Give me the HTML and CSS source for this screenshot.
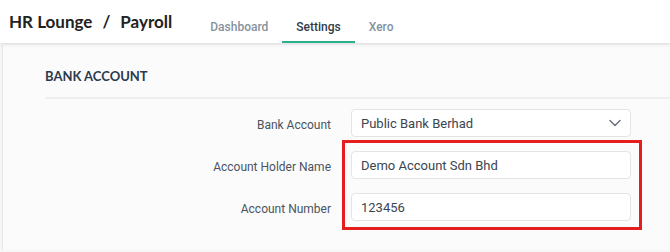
FILE: index.html
```html
<!DOCTYPE html>
<html lang="en">
<head>
    <meta charset="UTF-8">
    <meta name="viewport" content="width=device-width, initial-scale=1.0">
    <title>HR Lounge - Payroll Settings</title>
    <link rel="stylesheet" href="styles.css">
</head>
<body>

    <!-- Top Bar -->
    <div class="topbar">
        <div class="brand">
            <span>HR Lounge</span>
            <span class="slash">/</span>
            <span>Payroll</span>
        </div>
        <div class="tabs">
            <a href="#">Dashboard</a>
            <a href="#" class="active">Settings</a>
            <a href="#">Xero</a>
        </div>
    </div>

    <!-- Settings Card -->
    <div class="page">
        <div class="card">
            <div class="section-title">BANK ACCOUNT</div>

            <div class="form">
                <label for="bank">Bank Account</label>
                <div class="select-box">
                    <span id="bank">Public Bank Berhad</span>
                    <svg width="12" height="8" viewBox="0 0 12 8">
                        <path d="M1 1.5 L6 6.5 L11 1.5" fill="none" stroke="#69737f" stroke-width="1.5" stroke-linecap="round" stroke-linejoin="round"/>
                    </svg>
                </div>

                <label for="holder">Account Holder Name</label>
                <input id="holder" type="text" value="Demo Account Sdn Bhd">

                <label for="number">Account Number</label>
                <input id="number" type="text" value="123456">

                <!-- highlight box -->
                <div class="highlight"></div>
            </div>
        </div>
    </div>

</body>
</html>
```

FILE: styles.css
```css
body {
    margin: 0;
    padding: 0;
    font-family: Roboto, Arial, sans-serif;
    background-color: #f6f6f6;
    overflow: hidden;
}

/* Top Bar */
.topbar {
    display: flex;
    align-items: stretch;
    height: 43px;
    padding-left: 9px;
    background-color: #fff;
    box-shadow: 0 1px 4px rgba(0, 0, 0, 0.12);
    position: relative;
    z-index: 1;
}

.brand {
    display: flex;
    align-items: center;
    font-family: Lato, "Open Sans", sans-serif;
    font-weight: 700;
    font-size: 17px;
    color: #222;
    margin-right: 24px;
    padding-bottom: 1px;
}

.brand .slash {
    margin: 0 10px;
}

.tabs {
    display: flex;
}

.tabs a {
    display: flex;
    align-items: center;
    padding: 12px 14px 0;
    font-size: 12px;
    font-weight: 500;
    color: #8793a0;
    text-decoration: none;
    border-bottom: 2px solid transparent;
}

.tabs a.active {
    color: #2f3b47;
    border-bottom-color: #2bb08f;
}

/* Card */
.page {
    padding: 2px 0 0 2px;
}

.card {
    min-height: 205px;
    background-color: #fbfbfb;
    border-left: 1px solid #e8e8e8;
    padding-left: 42px;
}

.section-title {
    font-family: Lato, sans-serif;
    font-weight: 700;
    font-size: 13px;
    color: #2c3a4b;
    padding: 23px 0 13px;
    border-bottom: 2px solid #efefef;
}

.form {
    position: relative;
    display: grid;
    grid-template-columns: 286px 280px;
    column-gap: 20px;
    row-gap: 14px;
    align-items: center;
    padding-top: 10px;
}

.form label {
    text-align: right;
    font-size: 12px;
    color: #4a5461;
    padding-top: 3px;
}

.form input,
.select-box {
    box-sizing: border-box;
    height: 28px;
    width: 280px;
    padding: 0 9px;
    border: 1px solid #e4e4e4;
    border-radius: 4px;
    background-color: #fff;
    font-family: Roboto, Arial, sans-serif;
    font-size: 13px;
    color: #3b4550;
    outline: none;
}

.select-box {
    display: flex;
    align-items: center;
    justify-content: space-between;
    padding-right: 9px;
}

/* Red annotation box */
.highlight {
    position: absolute;
    left: 297px;
    top: 41px;
    width: 294px;
    height: 84px;
    border: 3px solid #e41e1e;
    pointer-events: none;
}
```
